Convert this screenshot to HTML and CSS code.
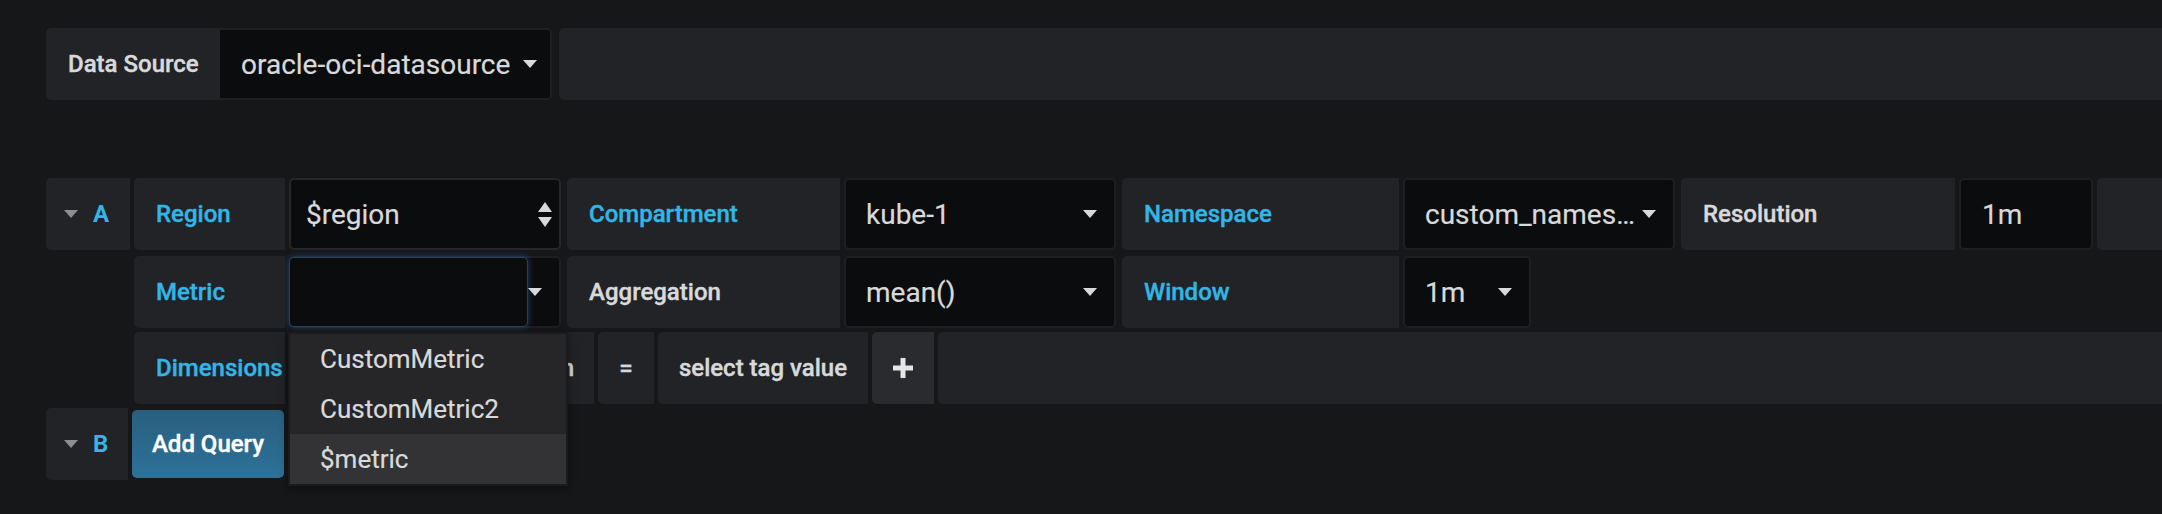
FILE: index.html
```html
<!DOCTYPE html>
<html>
<head>
<meta charset="utf-8">
<title>Query editor</title>
<link rel="stylesheet" href="styles.css">
</head>
<body>
<div class="page">
  <div class="ds-row">
    <div class="ds-box">
      <div class="label ds-label">Data Source</div>
      <div class="ds-select">
        <span>oracle-oci-datasource</span>
        <svg class="caret" width="14" height="8" viewBox="0 0 14 8"><path d="M0 0h14L7 8z"/></svg>
      </div>
    </div>
    <div class="filler ds-filler"></div>
  </div>

  <div class="query query-a">
    <div class="qhead">
      <svg class="collapse" width="14" height="8" viewBox="0 0 14 8"><path d="M0 0h14L7 8z"/></svg>
      <span class="qletter">A</span>
    </div>
    <div class="qbody">
      <div class="row row-first">
        <div class="label kw w-region">Region</div>
        <div class="select select-native">
          <span>$region</span>
          <svg class="updown" width="14" height="25" viewBox="0 0 14 25"><path d="M7 0l7 10H0z M0 15h14l-7 10z"/></svg>
        </div>
        <div class="label kw w-273">Compartment</div>
        <div class="select">
          <span>kube-1</span>
          <svg class="caret" width="14" height="8" viewBox="0 0 14 8"><path d="M0 0h14L7 8z"/></svg>
        </div>
        <div class="label kw w-277">Namespace</div>
        <div class="select">
          <span class="ellip">custom_names…</span>
          <svg class="caret" width="14" height="8" viewBox="0 0 14 8"><path d="M0 0h14L7 8z"/></svg>
        </div>
        <div class="label w-274">Resolution</div>
        <div class="input w-134">1m</div>
        <div class="filler"></div>
      </div>

      <div class="row">
        <div class="label kw w-region">Metric</div>
        <div class="select metric-select">
          <div class="focus-box"></div>
          <svg class="caret" width="14" height="8" viewBox="0 0 14 8"><path d="M0 0h14L7 8z"/></svg>
          <ul class="dropdown">
            <li class="dd-item">CustomMetric</li>
            <li class="dd-item">CustomMetric2</li>
            <li class="dd-item active">$metric</li>
          </ul>
        </div>
        <div class="label w-273">Aggregation</div>
        <div class="select">
          <span>mean()</span>
          <svg class="caret" width="14" height="8" viewBox="0 0 14 8"><path d="M0 0h14L7 8z"/></svg>
        </div>
        <div class="label kw w-277">Window</div>
        <div class="select w-128">
          <span>1m</span>
          <svg class="caret" width="14" height="8" viewBox="0 0 14 8"><path d="M0 0h14L7 8z"/></svg>
        </div>
      </div>

      <div class="row">
        <div class="label kw w-region">Dimensions</div>
        <div class="label key-label"><span class="key-text">n</span></div>
        <div class="label center w-56">=</div>
        <div class="label center w-210">select tag value</div>
        <div class="label center plus w-62">
          <svg width="20" height="20" viewBox="0 0 20 20"><path d="M7.5 0h5v7.5H20v5h-7.5V20h-5v-7.5H0v-5h7.5z"/></svg>
        </div>
        <div class="filler"></div>
      </div>
    </div>
  </div>

  <div class="query query-b">
    <div class="qhead qhead-b">
      <svg class="collapse" width="14" height="8" viewBox="0 0 14 8"><path d="M0 0h14L7 8z"/></svg>
      <span class="qletter">B</span>
    </div>
    <button class="add-query">Add Query</button>
  </div>
</div>
</body>
</html>
```

FILE: styles.css
```css
* { box-sizing: border-box; }

html, body {
  margin: 0;
  padding: 0;
  background: #161719;
  overflow: hidden;
}

body {
  width: 2162px;
  height: 514px;
  font-family: Roboto, "Helvetica Neue", Arial, sans-serif;
  color: #d8d9da;
}

.page {
  padding: 28px 0 0 46px;
}

/* Data source row */
.ds-row {
  display: flex;
  height: 72px;
  margin-bottom: 78px;
}

.ds-box {
  display: flex;
  flex-shrink: 0;
}

.ds-label {
  width: 174px;
}

.ds-select {
  display: flex;
  align-items: center;
  gap: 13px;
  height: 72px;
  padding: 0 13px 0 21px;
  background: #0b0c0e;
  border: 2px solid #1e1f22;
  border-left: none;
  border-radius: 0 5px 5px 0;
  font-size: 28px;
  white-space: nowrap;
  -webkit-text-stroke: 0.2px currentColor;
}

.ds-filler {
  margin-left: 7px;
}

/* generic pieces */
.label {
  display: flex;
  align-items: center;
  flex-shrink: 0;
  height: 72px;
  padding: 0 22px;
  margin-right: 4px;
  background: #212327;
  border-radius: 5px 0 0 5px;
  font-size: 24px;
  font-weight: 500;
  color: #d8d9da;
  white-space: nowrap;
  -webkit-text-stroke: 0.4px currentColor;
}

.ds-box .label { margin-right: 0; }

.label.kw { color: #33b5e5; }

.label.center {
  justify-content: center;
  padding: 0;
}

.filler {
  flex: 1;
  height: 72px;
  background: #212327;
  border-radius: 5px 0 0 5px;
}

.select {
  position: relative;
  display: flex;
  align-items: center;
  justify-content: space-between;
  flex-shrink: 0;
  width: 272px;
  height: 72px;
  padding: 0 17px 0 20px;
  margin-right: 6px;
  background: #0b0c0e;
  border: 2px solid #1e1f22;
  border-radius: 5px;
  font-size: 28px;
  white-space: nowrap;
  -webkit-text-stroke: 0.2px currentColor;
}

.select-native {
  padding: 0 7px 0 15px;
  border-color: #26272b;
}

.input {
  display: flex;
  align-items: center;
  flex-shrink: 0;
  height: 72px;
  padding: 0 21px;
  margin-right: 4px;
  background: #0b0c0e;
  border: 2px solid #1e1f22;
  border-radius: 5px;
  font-size: 28px;
  -webkit-text-stroke: 0.2px currentColor;
}

.ellip {
  overflow: hidden;
  white-space: nowrap;
  max-width: 215px;
}

.caret, .updown, .collapse { flex-shrink: 0; display: block; }
.caret path, .updown path { fill: #d8d9da; }
.collapse path { fill: #8e8e8e; }

/* widths */
.w-region { width: 151px; }
.w-273 { width: 273px; }
.w-274 { width: 274px; }
.w-277 { width: 277px; }
.w-134 { width: 134px; }
.w-128 { width: 128px; }
.w-56 { width: 56px; }
.w-210 { width: 210px; }
.w-62 { width: 62px; }

/* query blocks */
.query {
  display: flex;
  align-items: flex-start;
}

.query-a { margin-bottom: 4px; }

.qhead {
  display: flex;
  align-items: center;
  flex-shrink: 0;
  width: 84px;
  height: 72px;
  padding-left: 18px;
  margin-right: 4px;
  background: #212327;
  border-radius: 5px 0 0 5px;
}

.qhead-b { width: 82px; }

.collapse { margin-right: 15px; }

.qletter {
  color: #33b5e5;
  font-size: 24px;
  font-weight: 700;
}

.qbody {
  flex: 1;
  display: flex;
  flex-direction: column;
}

.row {
  display: flex;
  height: 72px;
  margin-bottom: 4px;
}

.row-first { margin-bottom: 6px; }
.qbody .row:last-child { margin-bottom: 0; }

/* focused metric select */
.metric-select {
  padding: 0 17px 0 0;
  z-index: 2;
}

.focus-box {
  align-self: stretch;
  width: 240px;
  margin: -1px 0 -1px -2px;
  background: #0b0c0e;
  border: 1px solid #2b4058;
  border-radius: 5px;
  box-shadow: 0 0 7px rgba(64, 140, 220, 0.4);
}

.dropdown {
  position: absolute;
  top: 74px;
  left: -3px;
  width: 280px;
  margin: 0;
  padding: 0;
  list-style: none;
  background: #262628;
  border: 2px solid #1b1b1d;
  box-shadow: 0 2px 8px rgba(0, 0, 0, 0.45);
}

.dd-item {
  display: flex;
  align-items: center;
  height: 50px;
  padding-left: 30px;
  font-size: 26px;
  color: #d8d9da;
  -webkit-text-stroke: 0.2px currentColor;
}

.dd-item.active { background: #333335; }

/* dimensions row: key select mostly hidden behind the open dropdown */
.key-label {
  width: 305px;
  justify-content: flex-end;
  padding-right: 20px;
  border-radius: 0;
}

.plus { background: #2a2b2f; }
.plus svg path { fill: #e6e6e6; }

/* add query */
.add-query {
  flex-shrink: 0;
  width: 152px;
  height: 68px;
  margin-top: 2px;
  padding: 0;
  border: none;
  border-radius: 5px;
  background: linear-gradient(#285f7f, #2e7199);
  color: #ffffff;
  font-family: Roboto, "Helvetica Neue", Arial, sans-serif;
  font-size: 24px;
  font-weight: 500;
  -webkit-text-stroke: 0.4px currentColor;
}
```
